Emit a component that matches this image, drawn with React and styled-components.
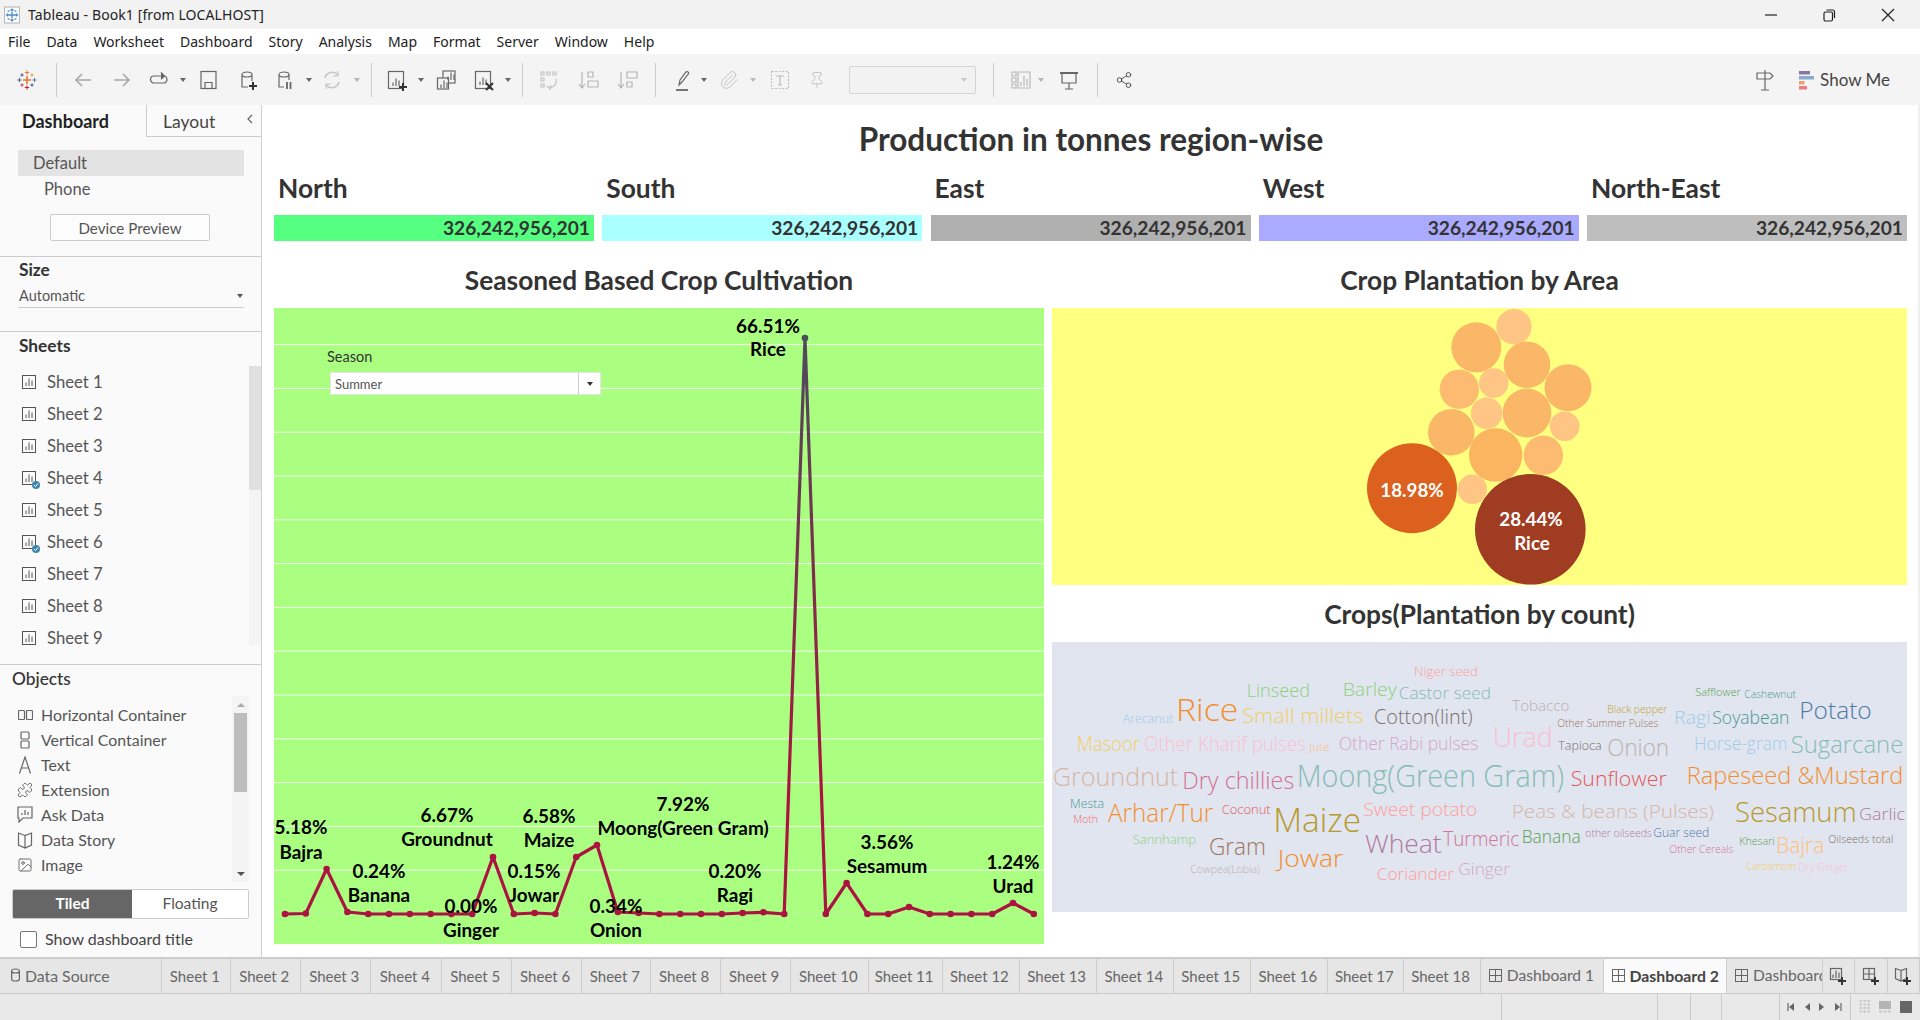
import React from 'react';
import styled, { createGlobalStyle } from 'styled-components';
import { Paperclip, Pin, Share2, Puzzle, Image as ImageIcon } from 'lucide-react';

const Global = createGlobalStyle`
  html, body { margin: 0; padding: 0; background: #fff; }
  * { box-sizing: border-box; }
`;
const UI = `"Noto Sans", "Open Sans", sans-serif`;
const TB = `Lato, "Open Sans", sans-serif`;

const Page = styled.div`width:1920px;height:1020px;overflow:hidden;display:flex;flex-direction:column;font-family:${TB};color:#333;background:#fff;`;
const TitleBar = styled.div`height:29px;background:#f2f2f2;display:flex;align-items:center;padding-left:4px;font:14px ${UI};color:#222;`;
const TitleText = styled.span`margin-left:8px;letter-spacing:.1px;`;
const WinControls = styled.div`margin-left:auto;padding-right:3px;display:flex;`;
const WinBtn = styled.div`width:58.5px;height:29px;display:flex;align-items:center;justify-content:center;color:#222;`;
const MenuBar = styled.div`height:25px;background:#fff;display:flex;align-items:center;padding-left:8px;gap:16px;font:14px ${UI};color:#222;`;
const Toolbar = styled.div`height:51px;background:#f4f4f4;display:flex;align-items:center;`;
const ToolSlot = styled.div`width:${p=>p.$w}px;margin-left:${p=>p.$ml||0}px;height:51px;flex:none;display:flex;align-items:center;justify-content:center;color:${p=>p.$c||'#666'};`;
const ToolSep = styled.div`width:1px;height:34px;flex:none;background:#ccc;`;
const Caret = styled.div`width:0;height:0;border-left:3.5px solid transparent;border-right:3.5px solid transparent;border-top:4px solid currentColor;`;
const Combo = styled.div`width:127px;height:28px;flex:none;margin:0 17.5px 0 20px;border:1px solid #d4d4d4;border-radius:2px;background:#f2f2f2;color:#c8c8c8;display:flex;align-items:center;justify-content:flex-end;padding-right:8px;`;
const ToolRight = styled.div`margin-left:auto;display:flex;align-items:center;padding-right:30px;`;
const ShowMe = styled.div`display:flex;align-items:center;gap:6px;margin-left:20px;font:17px ${TB};color:#444;`;

const Body = styled.div`height:852px;display:flex;`;
const Side = styled.aside`width:262px;flex:none;background:#fafafa;border-right:1px solid #cfcfcf;display:flex;flex-direction:column;`;
const SideTabs = styled.div`height:32px;display:flex;`;
const SideTabActive = styled.div`width:146px;padding-left:22px;font:700 18px/32px ${TB};color:#222;`;
const SideTab = styled.div`flex:1;border-left:1px solid #ccc;border-bottom:1px solid #ccc;padding-left:16px;font:17.5px/34px ${TB};color:#444;display:flex;justify-content:space-between;`;
const Chev = styled.span`padding:7px 6px 0 0;display:flex;color:#666;`;
const Sect = styled.section`height:${p=>p.$h}px;flex:none;border-bottom:1px solid #ccc;padding-top:${p=>p.$pt||0}px;`;
const DevRow = styled.div`height:26px;margin:0 17px 0 18px;padding-left:${p=>p.$sel?15:26}px;background:${p=>p.$sel?'#e3e3e3':'transparent'};font:16.5px/26px ${TB};color:#555;`;
const PreviewBtn = styled.div`width:160px;height:27px;margin:12px 0 0 50px;border:1px solid #ccc;border-radius:2px;background:#fcfcfc;text-align:center;font:15.2px/26px ${TB};color:#555;`;
const SideHead = styled.div`padding-left:${p=>p.$l||19}px;font:${p=>p.$w||700} 17.3px/20px ${TB};color:#333;`;
const Picker = styled.div`margin:4px 17px 0 18px;height:24px;padding:0 1px;border-bottom:1px solid #ccc;display:flex;justify-content:space-between;align-items:center;font:14.5px ${TB};color:#555;`;
const SheetBox = styled.div`margin-top:10px;height:279px;display:flex;`;
const SheetList = styled.div`flex:1;`;
const SheetRow = styled.div`height:32px;display:flex;align-items:center;padding:0 0 0 22px;gap:11px;font:16.7px ${TB};color:#555;`;
const SheetIco = styled.div`position:relative;width:14px;height:14px;display:flex;`;
const Badge = styled.div`position:absolute;right:-4px;bottom:-4px;width:8px;height:8px;border-radius:50%;background:#3f86ad;color:#fff;display:flex;`;
const Scroll = styled.div`width:${p=>p.$w}px;flex:none;background:#f4f4f4;display:flex;flex-direction:column;align-items:center;`;
const Thumb = styled.div`width:${p=>p.$w}px;height:${p=>p.$h}px;flex:none;background:${p=>p.$c};`;
const ScrollFill = styled.div`flex:1;`;
const ObjSect = styled.div`padding-top:4px;`;
const ObjBox = styled.div`margin-top:7px;height:186px;display:flex;padding:0 12px 0 17px;`;
const ObjList = styled.div`flex:1;padding-top:6px;`;
const ObjRow = styled.div`height:25px;display:flex;align-items:center;gap:8px;font:15.9px ${TB};color:#555;`;
const ObjIco = styled.div`width:16px;height:18px;display:flex;align-items:center;justify-content:center;color:#666;`;
const ArrowBtn = styled.div`height:17px;display:flex;align-items:center;justify-content:center;color:${p=>p.$c||'#aaa'};`;
const Triangle = styled.div`width:0;height:0;border-left:4px solid transparent;border-right:4px solid transparent;${p=>p.$up?'border-bottom':'border-top'}:4px solid currentColor;`;
const Toggle = styled.div`margin:7px 12px 0 12px;height:30px;display:flex;border:1px solid #ccc;border-radius:2px;overflow:hidden;`;
const ToggleBtn = styled.div`flex:${p=>p.$on?'0 0 119px':'1'};background:${p=>p.$on?'#666':'#fff'};color:${p=>p.$on?'#fff':'#555'};font:${p=>p.$on?700:400} 15.5px/26px ${TB};text-align:center;`;
const CheckRow = styled.div`margin:10px 0 0 20px;display:flex;align-items:center;gap:8px;font:16px ${TB};color:#444;`;
const Check = styled.div`width:17px;height:17px;margin-top:2px;border:1px solid #777;border-radius:2px;background:#fff;`;

const Main = styled.main`flex:1;padding-left:12px;position:relative;border-right:2px solid #efefef;display:flex;flex-direction:column;background:#fff;`;
const DashTitle = styled.h1`margin:0 0 0 -12px;height:70px;font:700 31.5px/68px ${TB};text-align:center;color:#333;padding-left:2px;`;
const Regions = styled.div`display:grid;grid-template-columns:repeat(5,320px);column-gap:8.25px;`;
const Region = styled.div`display:flex;flex-direction:column;`;
const RegionName = styled.div`height:40px;padding:0 0 14px 4px;font:700 26.4px/26px ${TB};color:#333;`;
const Kpi = styled.div`height:26px;background:${p=>p.$c};text-align:right;padding-right:4px;font:700 19.2px/26px ${TB};color:#333;`;
const Dash = styled.div`display:grid;grid-template-columns:770px 855px;gap:8px;`;
const Col = styled.div`display:flex;flex-direction:column;`;
const SecTitle = styled.div`height:${p=>p.$h}px;line-height:${p=>p.$l}px;padding-top:${p=>p.$t||0}px;font-size:26.3px;font-weight:700;text-align:center;color:#333;`;
const ChartPanel = styled.div`position:relative;overflow:hidden;height:636px;background:#aaff80;`;
const YellowPanel = styled.div`height:277px;background:#ffff80;overflow:hidden;`;
const CloudPanel = styled.div`height:270px;background:#e1e5ef;overflow:hidden;`;
const Draw = styled.svg`display:block;`;
const ChartText = styled.text`font:700 18.9px ${TB};fill:#000;text-anchor:middle;dominant-baseline:central;`;
const BubbleText = styled.text`font:700 18.8px ${TB};fill:#fff;text-anchor:middle;dominant-baseline:central;`;
const Word = styled.text`font-family:"Open Sans",sans-serif;font-weight:300;`;
const Filter = styled.div`position:absolute;left:53px;top:40px;`;
const FilterLabel = styled.div`font:14.5px/18px ${TB};color:#333;`;
const FilterBox = styled.div`margin:6px 0 0 3px;width:271px;height:23px;background:#fff;border:1px solid #e4e4e4;display:flex;align-items:center;justify-content:space-between;font:13px ${TB};color:#555;padding-left:4px;`;
const FilterArrow = styled.div`width:22px;height:21px;border-left:1px solid #ccc;display:flex;align-items:center;justify-content:center;color:#333;`;

const TabBar = styled.div`height:37px;display:flex;background:#e6e6e6;border-top:2px solid #ccc;border-bottom:1px solid #ccc;`;
const Tab = styled.div`width:${p=>p.$w}px;flex:none;overflow:hidden;white-space:nowrap;display:flex;align-items:center;gap:5px;justify-content:${p=>p.$left?'flex-start':'center'};padding:0 ${p=>p.$left?0:3}px ${p=>p.$left?2:0}px ${p=>p.$left?p.$left:0}px;border-right:1px solid #ccc;font:${p=>p.$on?700:400} ${p=>p.$fs||15}px ${TB};color:${p=>p.$on?'#444':'#666'};background:${p=>p.$on?'#fafafa':'transparent'};`;
const TabIco = styled.span`display:flex;flex:none;color:#666;`;
const StatusBar = styled.div`height:26px;display:flex;background:#e9e9e9;`;
const StatusCell = styled.div`width:${p=>p.$w}px;flex:none;border-right:1px solid #ccc;`;
const StatusNav = styled.div`width:${p=>p.$w}px;flex:none;border-right:${p=>p.$b?'1px solid #ccc':'none'};display:flex;align-items:center;justify-content:space-around;padding:0 4px;color:${p=>p.$c||'#666'};`;

const S = { fill:'none', stroke:'currentColor', strokeWidth:1.2 };
const I = ({w=24,h=24,children,vb}) => <svg width={w} height={h} viewBox={vb||`0 0 ${w} ${h}`} {...S}>{children}</svg>;
const Cross = ({x,y,s,c,w=1.3}) => <path d={`M${x-s} ${y}H${x+s}M${x} ${y-s}V${y+s}`} stroke={c} strokeWidth={w} fill="none"/>;

const Logo = () => <I w={20} h={22}>
  <Cross x={10} y={11} s={4} c="#e8762d" w={1.6}/><Cross x={10} y={3.5} s={2.2} c="#e8762d" w={1}/>
  <Cross x={10} y={18.5} s={2.2} c="#c72035" w={1}/><Cross x={2.5} y={11} s={2.2} c="#5b6591" w={1}/>
  <Cross x={17.5} y={11} s={2.2} c="#59879b" w={1}/><Cross x={5} y={6} s={1.6} c="#1f457e" w={.9}/>
  <Cross x={15} y={6} s={1.6} c="#eb912b" w={.9}/><Cross x={5} y={16} s={1.6} c="#c72035" w={.9}/><Cross x={15} y={16} s={1.6} c="#1f447e" w={.9}/></I>;
const AppIcon = () => <I w={16} h={18}><rect x=".5" y="1" width="15" height="16" fill="#fdfdfd" stroke="#bbb"/>
  <Cross x={8} y={9} s={3} c="#4f8dc4"/><Cross x={8} y={4} s={1.6} c="#4f8dc4"/><Cross x={8} y={14} s={1.6} c="#4f8dc4"/><Cross x={3.5} y={9} s={1.6} c="#4f8dc4"/><Cross x={12.5} y={9} s={1.6} c="#4f8dc4"/><Cross x={4.5} y={5} s={1} c="#7fb0d8"/><Cross x={11.5} y={5} s={1} c="#7fb0d8"/><Cross x={4.5} y={13} s={1} c="#7fb0d8"/><Cross x={11.5} y={13} s={1} c="#7fb0d8"/></I>;
const Bars = ({x=0,y=0}) => <path d={`M${x+4} ${y+11}V${y+7.5}M${x+7} ${y+11}V${y+3.5}M${x+10} ${y+11}V${y+5.5}`}/>;
const SheetGlyph = ({s=14}) => <svg width={s} height={s} viewBox="0 0 14 14" {...S} strokeWidth={1}><rect x=".5" y=".5" width="13" height="13"/><Bars/></svg>;
const Plus2 = ({x,y}) => <path d={`M${x-4} ${y}H${x+4}M${x} ${y-4}V${y+4}`} stroke="#333" strokeWidth={2}/>;

const tools = [
  [27,<Logo/>],[56,<ToolSep/>],
  [83,<I><path d="M20 12H5M11 6l-6 6 6 6" strokeWidth={1.6}/></I>,'#a8a8a8'],
  [121.6,<I><path d="M4 12h15M13 6l6 6-6 6" strokeWidth={1.6}/></I>,'#a8a8a8'],
  [159,<I><path d="M15 8H7a3.4 3.4 0 0 0 0 7h10a3.2 3.2 0 0 0 3-3.4c0-1.6-.8-2.8-2-3.6"/><path d="M14 4.5l3.5 3.5-3.5 3.2" fill="currentColor"/></I>],
  [183,<Caret/>],
  [209,<I><rect x="4" y="3.5" width="15" height="17"/><path d="M8 20.5v-6h7v6"/></I>],
  [248,<I><path d="M6 6.5a5 2.5 0 0 1 10 0V13M6 6.5V19h6M6 6.5a5 2.5 0 0 0 10 0"/><Plus2 x={17} y={18}/></I>],
  [285,<I><path d="M6 6.5a5 2.5 0 0 1 10 0V12M6 6.5V19h5M6 6.5a5 2.5 0 0 0 10 0"/><path d="M14 14v7M17.5 14v7" strokeWidth={1.8}/></I>],
  [309,<Caret/>],
  [332,<I><path d="M5 10a7.5 7.5 0 0 1 13-3M19 14a7.5 7.5 0 0 1-13 3" strokeWidth={1.6}/><path d="M18 3v5h-5M6 21v-5h5" /></I>,'#c6c6c6'],
  [357,<Caret/>,'#b5b5b5'],[372,<ToolSep/>],
  [397,<I><rect x="3.5" y="3.5" width="15" height="17"/><Bars x={4} y={7}/><Plus2 x={18} y={19}/></I>],
  [421,<Caret/>],
  [446.5,<I><rect x="9" y="3" width="12" height="12" fill="#f4f4f4"/><rect x="3.5" y="10" width="11" height="11" fill="#f4f4f4"/><Bars x={10} y={1}/><Bars x={3} y={9}/></I>],
  [484.5,<I><rect x="3.5" y="3.5" width="15" height="17"/><Bars x={4} y={6}/><path d="M14 15l7 7M21 15l-7 7" stroke="#333" strokeWidth={2}/></I>],
  [508,<Caret/>],[523,<ToolSep/>],
  [549,<I><path d="M4 4h3v3H4zM10 4h3v3h-3zM16 4h3v3h-3zM4 10h3v3H4zM4 16h3v3H4zM19 11c1 4-1 8-6 9M10 18l3 3 1-4"/></I>,'#c2c2c2'],
  [589,<I><path d="M5 4v15M2 16l3 4 3-4M11 4h5v5h-5zM11 13h10v6H11z"/></I>,'#b5b5b5'],
  [628,<I><path d="M5 4v15M2 16l3 4 3-4M11 4h10v6H11zM11 14h5v5h-5z"/></I>,'#b5b5b5'],
  [656,<ToolSep/>],
  [683,<I><path d="M8 17l1-5 6-8c1-1 3 0 2.6 1.6L11 14z" /><path d="M5 22h12" strokeWidth={1.8}/></I>],
  [704,<Caret/>],[729,<Paperclip size={20} strokeWidth={1.1}/>,'#bcbcbc'],[753,<Caret/>,'#bbb'],
  [780,<I><rect x="3.5" y="3.5" width="17" height="17" strokeDasharray="2 1.5"/><path d="M8 8h8M12 8v9M10 17h4"/></I>,'#bcbcbc'],
  [817,<Pin size={18} strokeWidth={1.1}/>,'#bcbcbc'],
];
const toolsB = [
  [1019.6,<I><path d="M4 4h4v4H4zM4 10h4v4H4zM4 16h4v4H4zM10 4h12v16H10zM13 18v-4M16 18V8M19 18v-7"/></I>,'#b8b8b8'],
  [1041,<Caret/>,'#b5b5b5'],
  [1068.6,<I><path d="M3 5h18" strokeWidth={2}/><path d="M5 5v10h14V5M12 15v6M8 21h8"/></I>],
  [1097.5,<ToolSep/>],
  [1124,<Share2 size={18} strokeWidth={1.2}/>,'#444'],
];
const slotWidth = (el) => (el.type === Caret ? 8 : el.type === ToolSep ? 1 : 24);
const slots = (list, start) => {
  let end = start;
  return list.map(([c, el, col], i) => {
    const w = slotWidth(el);
    const ml = c - w / 2 - end;
    end = c + w / 2;
    return <ToolSlot key={i} $w={w} $ml={ml} $c={col}>{el}</ToolSlot>;
  });
};

const sheets = [1,2,3,4,5,6,7,8,9];
const Objs = [
  ['Horizontal Container',<I w={15} h={12}><rect x=".5" y="1.5" width="6" height="9" rx="1"/><rect x="8.5" y="1.5" width="6" height="9" rx="1"/></I>],
  ['Vertical Container',<I w={12} h={18}><rect x="2" y="1" width="8" height="7" rx="1"/><rect x="2" y="10" width="8" height="7" rx="1"/></I>],
  ['Text',<I w={14} h={18}><path d="M1.5 17.5L7 1l5.5 16.5M3.5 12h7"/></I>],
  ['Extension',<Puzzle size={16} strokeWidth={1.4}/>],
  ['Ask Data',<I w={16} h={17}><path d="M1 1h14v11H6l-4 4v-4H1z"/><path d="M5 9V7M8 9V4M11 9V6"/></I>],
  ['Data Story',<I w={16} h={18}><path d="M8 4.5L1.5 2v12L8 17l6.5-3V2zM8 4.5V17"/></I>],
  ['Image',<ImageIcon size={16} strokeWidth={1.4}/>],
];
const regions = [['North','#55ff80'],['South','#aaffff'],['East','#b0b0b0'],['West','#aaaaff'],['North-East','#bebebe']];

const Y0 = 914;
const ptsY = [914,913.5,869,912,914,914,914,914,914,914,857,914,913,914,857,845,912,913,914,914,914,914,913,912.3,914,338,914,883,914,914,907,914,914,914,914,903,914];
const pts = ptsY.map((y,i)=>[285+i*20.8,y]);
const gridY = Array.from({length:13},(_,k)=>Y0-43.8*(k+1));
const labels = [
  ['5.18%','Bajra',301,826,851],['0.24%','Banana',379,870,894],['6.67%','Groundnut',447,814,838],
  ['0.00%','Ginger',471,905,929],['6.58%','Maize',549,815,839],['0.15%','Jowar',534,870,894],
  ['7.92%','Moong(Green Gram)',683,803,827],['0.34%','Onion',616,905,929],['0.20%','Ragi',735,870,894],
  ['66.51%','Rice',768,325,348],['3.56%','Sesamum',887,841,865],['1.24%','Urad',1013,861,885],
];
const bubbles = [
  [1514,326.7,17.7,'#fec585'],[1476.3,347.3,25,'#fbb768'],[1527,364.7,23.3,'#fbb768'],[1568,387.7,23.5,'#fbb768'],
  [1459.3,389.3,19.7,'#fdbb71'],[1493.7,383,14.7,'#fec585'],[1486.7,413.3,15.8,'#fec585'],[1527,413,24.4,'#fbb768'],
  [1564.7,426.3,14.8,'#fec585'],[1451.3,432.3,23.3,'#fbb768'],[1495.7,455,26.7,'#fbb561'],[1543.3,455.3,19.7,'#fdbb71'],
  [1472.3,489.3,14.7,'#fec585'],[1412,488.3,45,'#dc601e'],[1530.3,529.3,55.3,'#a03c21'],
];
const words = [
  ['Rice',1176,1238.3,721,31,'#f28e2b'],['Linseed',1246.7,1310,697.3,18,'#8cd17d'],['Barley',1342.7,1396.7,696,19,'#8cd17d'],
  ['Niger seed',1414,1478,676,12.5,'#ff9d9a'],['Castor seed',1398.7,1491,699.3,17,'#86bcb6'],['Arecanut',1122.7,1173.3,722.7,12.5,'#a0cbe8'],
  ['Small millets',1242.3,1363.3,723.3,20,'#f1ce63'],['Cotton(lint)',1374,1472.7,724,20,'#79706e'],['Masoor',1076.7,1140,750.7,20,'#f1ce63'],
  ['Other Kharif pulses',1144,1305.7,750.7,20,'#fabfd2'],['Jute',1309.3,1329.3,750.7,10.5,'#ffbe7d'],['Other Rabi pulses',1338.7,1478.3,750,18,'#d4a6c8'],
  ['Groundnut',1052.7,1178.3,785.7,26,'#d7b5a6'],['Dry chillies',1182.3,1294.3,788.7,23,'#d37295'],['Moong(Green Gram)',1296.7,1564,787.3,31,'#86bcb6'],
  ['Mesta',1070,1104,807.7,12.5,'#499894'],['Moth',1073.3,1097.7,823,10.5,'#f0686a'],['Arhar/Tur',1108,1213.3,821.7,25,'#f28e2b'],
  ['Coconut',1221.7,1270.7,813.7,12.5,'#e15759'],['Maize',1273.3,1361,831.7,33,'#b6992d'],['Sweet potato',1363.3,1477.3,815.7,19,'#ff9d9a'],
  ['Sannhamp',1132.7,1196,844,12.5,'#8cd17d'],['Gram',1209,1266,855,23,'#9d7660'],['Jowar',1277.7,1343.3,866.7,23,'#f28e2b'],
  ['Wheat',1365,1441.7,852.7,26,'#b07aa1'],['Turmeric',1443.3,1519.3,846,19.5,'#d37295'],['Cowpea(Lobia)',1190.3,1260,872.7,10.5,'#bab0ac'],
  ['Coriander',1376.7,1454,880,17,'#ff9d9a'],['Ginger',1458.3,1510,875,17,'#d4a6c8'],['Tobacco',1512.3,1569.3,711,14.5,'#bab0ac'],
  ['Black pepper',1607.3,1667.3,713.3,11,'#c4a02c'],['Other Summer Pulses',1557.3,1658.3,726.7,10.5,'#9d7660'],['Urad',1492.7,1552.7,746.7,27,'#fabfd2'],
  ['Tapioca',1558.3,1601.7,750,12,'#79706e'],['Onion',1607.3,1669,755.7,23,'#bab0ac'],['Ragi',1674,1710.7,724,19,'#a0cbe8'],
  ['Soyabean',1712.3,1789.3,724,18,'#499894'],['Safflower',1695.3,1740.7,695.7,10.5,'#59a14f'],['Cashewnut',1744.3,1796,698,10,'#499894'],
  ['Potato',1799.3,1871.7,719.3,23,'#4e79a7'],['Horse-gram',1694,1787.3,750,18,'#a0cbe8'],['Sugarcane',1790.7,1903.3,752.7,23,'#86bcb6'],
  ['Sunflower',1570.7,1666.7,785.7,19.5,'#e15759'],['Rapeseed &Mustard',1686.7,1903.3,784.3,23,'#f28e2b'],['Peas & beans (Pulses)',1511.7,1714,817.7,19,'#d7b5a6'],
  ['Sesamum',1735,1856.7,821.7,27,'#b6992d'],['Garlic',1859,1905,820,16.5,'#b07aa1'],['Banana',1521.7,1580.7,842.7,17.5,'#59a14f'],
  ['other oilseeds',1585.3,1651.7,836.7,11,'#b07aa1'],['Guar seed',1653.3,1709.3,836.7,12.5,'#4e79a7'],['Khesari',1739.3,1774.7,844.7,11,'#59a14f'],
  ['Bajra',1776,1824.3,852.7,22,'#ffbe7d'],['Oilseeds total',1828.3,1893.3,843.3,11,'#79706e'],['Other Cereals',1669.3,1733.3,852.7,11,'#d37295'],
  ['Cardamom',1746,1796,870,10.5,'#f1ce63'],['Dry Ginger',1798.3,1848.3,870.7,10.5,'#fabfd2'],
];
const menu = ['File','Data','Worksheet','Dashboard','Story','Analysis','Map','Format','Server','Window','Help'];
const tabs = [['Sheet 1',69],['Sheet 2',69.6],['Sheet 3',70.4],['Sheet 4',71],['Sheet 5',69.6],['Sheet 6',70.4],['Sheet 7',69],['Sheet 8',69.6],['Sheet 9',70.4],['Sheet 10',78],['Sheet 11',73.6],['Sheet 12',77],['Sheet 13',77.5],['Sheet 14',76.8],['Sheet 15',77],['Sheet 16',77.2],['Sheet 17',75.9],['Sheet 18',76.5]];
const DashGlyph = () => <svg width="13" height="13" viewBox="0 0 13 13" {...S} strokeWidth={1}><rect x=".5" y=".5" width="12" height="12"/><path d="M6.5 .5v12M.5 6.5h12"/></svg>;

export default function App() {
  return (
    <Page>
      <Global/>
      <TitleBar>
        <AppIcon/>
        <TitleText>Tableau - Book1 [from LOCALHOST]</TitleText>
        <WinControls>
          <WinBtn><I w={14} h={14}><path d="M1 7h12"/></I></WinBtn>
          <WinBtn><I w={14} h={14}><rect x="2" y="4" width="8.5" height="9" rx="1.5"/><path d="M4.5 2h6a2 2 0 0 1 2 2v6"/></I></WinBtn>
          <WinBtn><I w={14} h={14}><path d="M1 1l12 12M13 1L1 13"/></I></WinBtn>
        </WinControls>
      </TitleBar>
      <MenuBar>{menu.map(m=><span key={m}>{m}</span>)}</MenuBar>
      <Toolbar>
        {slots(tools,0)}
        <Combo><Caret/></Combo>
        <ToolSep/>
        {slots(toolsB,994)}
        <ToolRight>
          <ToolSlot $w={28}><I><path d="M12 2v20M8 22h8M4 5h13l3 3-3 3H4z"/></I></ToolSlot>
          <ShowMe>
            <I w={15} h={20}><rect y="1" width="11" height="3.5" fill="#8a76a0" stroke="none"/><rect y="6" width="15" height="3.5" fill="#87a8cf" stroke="none"/><rect y="11" width="5.5" height="3.5" fill="#f0a070" stroke="none"/><rect y="16" width="8" height="3.5" fill="#ef7a80" stroke="none"/></I>
            Show Me
          </ShowMe>
        </ToolRight>
      </Toolbar>
      <Body>
        <Side>
          <SideTabs>
            <SideTabActive>Dashboard</SideTabActive>
            <SideTab>Layout<Chev><I w={10} h={14}><path d="M7 3L3 7l4 4"/></I></Chev></SideTab>
          </SideTabs>
          <Sect $h={120} $pt={13}>
            <DevRow $sel>Default</DevRow>
            <DevRow>Phone</DevRow>
            <PreviewBtn>Device Preview</PreviewBtn>
          </Sect>
          <Sect $h={75} $pt={3}>
            <SideHead>Size</SideHead>
            <Picker>Automatic<Caret/></Picker>
          </Sect>
          <Sect $h={333} $pt={4}>
            <SideHead>Sheets</SideHead>
            <SheetBox>
              <SheetList>
                {sheets.map(n=>(
                  <SheetRow key={n}><SheetIco><SheetGlyph/>{(n===4||n===6)&&<Badge><svg width="8" height="8" viewBox="0 0 8 8" fill="none" stroke="currentColor" strokeWidth="1"><path d="M2 4l1.5 1.5L6 2.5"/></svg></Badge>}</SheetIco>Sheet {n}</SheetRow>
                ))}
              </SheetList>
              <Scroll $w={12}><Thumb $w={12} $h={124} $c="#e0e0e0"/></Scroll>
            </SheetBox>
          </Sect>
          <ObjSect>
            <SideHead $l={12} $w={500}>Objects</SideHead>
            <ObjBox>
              <ObjList>
                {Objs.map(([t,ic])=><ObjRow key={t}><ObjIco>{ic}</ObjIco>{t}</ObjRow>)}
              </ObjList>
              <Scroll $w={17}>
                <ArrowBtn><Triangle $up/></ArrowBtn>
                <Thumb $w={13} $h={79} $c="#bdbdbd"/>
                <ScrollFill/>
                <ArrowBtn $c="#555"><Triangle/></ArrowBtn>
              </Scroll>
            </ObjBox>
            <Toggle><ToggleBtn $on>Tiled</ToggleBtn><ToggleBtn>Floating</ToggleBtn></Toggle>
            <CheckRow><Check/>Show dashboard title</CheckRow>
          </ObjSect>
        </Side>
        <Main>
          <DashTitle>Production in tonnes region-wise</DashTitle>
          <Regions>
            {regions.map(([n,c])=>(
              <Region key={n}><RegionName>{n}</RegionName><Kpi $c={c}>326,242,956,201</Kpi></Region>
            ))}
          </Regions>
          <Dash>
            <Col>
              <SecTitle $h={67} $l={47} $t={16}>Seasoned Based Crop Cultivation</SecTitle>
              <ChartPanel>
                <Draw width="770" height="636" viewBox="274 308 770 636">
                  <defs>
                    <linearGradient id="lineGrad" gradientUnits="userSpaceOnUse" x1="0" y1="338" x2="0" y2="780">
                      <stop offset="0" stopColor="#4c4c5c"/><stop offset="1" stopColor="#ab1440"/>
                    </linearGradient>
                  </defs>
                  {gridY.map(y=><line key={y} x1="274" x2="1044" y1={y} y2={y} stroke="#fff" strokeOpacity=".85" strokeWidth="1"/>)}
                  <line x1="274" x2="1044" y1={Y0} y2={Y0} stroke="#ddd" strokeDasharray="1 2"/>
                  <polyline points={pts.map(p=>p.join(',')).join(' ')} fill="none" stroke="url(#lineGrad)" strokeWidth="3.2" strokeLinejoin="round"/>
                  {pts.map(([x,y])=><circle key={x} cx={x} cy={y} r="3.3" fill="url(#lineGrad)"/>)}
                  {labels.map(([a,b,x,y1,y2])=>(
                    <g key={b}><ChartText x={x} y={y1}>{a}</ChartText><ChartText x={x} y={y2}>{b}</ChartText></g>
                  ))}
                </Draw>
                <Filter>
                  <FilterLabel>Season</FilterLabel>
                  <FilterBox>Summer<FilterArrow><Caret/></FilterArrow></FilterBox>
                </Filter>
              </ChartPanel>
            </Col>
            <Col>
              <SecTitle $h={67} $l={47} $t={16}>Crop Plantation by Area</SecTitle>
              <YellowPanel>
                <Draw width="855" height="277" viewBox="1052 308 855 277">
                  {bubbles.map(([x,y,r,c])=><circle key={x+y} cx={x} cy={y} r={r} fill={c}/>)}
                  <BubbleText x={1412} y={489}>18.98%</BubbleText>
                  <BubbleText x={1531} y={518}>28.44%</BubbleText>
                  <BubbleText x={1532} y={542}>Rice</BubbleText>
                </Draw>
              </YellowPanel>
              <SecTitle $h={57} $l={59}>Crops(Plantation by count)</SecTitle>
              <CloudPanel>
                <Draw width="855" height="270" viewBox="1052 642 855 270">
                  {words.map(([t,x0,x1,y,s,c])=>(
                    <Word key={t} x={x0} y={y} fontSize={s} fill={c} textLength={x1-x0} lengthAdjust="spacingAndGlyphs">{t}</Word>
                  ))}
                </Draw>
              </CloudPanel>
            </Col>
          </Dash>
        </Main>
      </Body>
      <TabBar>
        <Tab $w={162.4} $left={11} $fs={15.8}>
          <TabIco><I w={9} h={14}><path d="M.6 3a3.9 2 0 0 1 7.8 0v8a3.9 2 0 0 1-7.8 0zM.6 3a3.9 2 0 0 0 7.8 0"/></I></TabIco>Data Source
        </Tab>
        {tabs.map(([t,w])=><Tab key={t} $w={w}>{t}</Tab>)}
        <Tab $w={122.7} $left={8} $fs={15.6}><TabIco><DashGlyph/></TabIco>Dashboard 1</Tab>
        <Tab $w={123.6} $left={8} $on $fs={15.8}><TabIco><DashGlyph/></TabIco>Dashboard 2</Tab>
        <Tab $w={95.7} $left={8} $fs={15.6}><TabIco><DashGlyph/></TabIco>Dashboard 3</Tab>
        <Tab $w={32.5}><I w={20} h={20}><rect x="3.5" y="2.5" width="11" height="11"/><Bars x={2} y={1}/><Plus2 x={15} y={15}/></I></Tab>
        <Tab $w={32.5}><I w={20} h={20}><rect x="3.5" y="2.5" width="11" height="11"/><path d="M9 2.5v11M3.5 8h11"/><Plus2 x={15} y={15}/></I></Tab>
        <Tab $w={32.5}><I w={20} h={20}><path d="M9 4.5L3.5 2.5v10l5.5 2.5 5.5-2.5v-10zM9 4.5V15"/><Plus2 x={15} y={15}/></I></Tab>
      </TabBar>
      <StatusBar>
        <StatusCell $w={1501.6}/>
        <StatusCell $w={156.4}/>
        <StatusCell $w={32.6}/>
        <StatusCell $w={31.8}/>
        <StatusCell $w={57.2}/>
        <StatusNav $w={71} $b>
          <I w={8} h={10}><path d="M1 1v8" /><path d="M7 1L2 5l5 4z" fill="currentColor" stroke="none"/></I>
          <I w={8} h={10}><path d="M7 1L2 5l5 4z" fill="currentColor" stroke="none"/></I>
          <I w={8} h={10}><path d="M1 1l5 4-5 4z" fill="currentColor" stroke="none"/></I>
          <I w={8} h={10}><path d="M7 1v8"/><path d="M1 1l5 4-5 4z" fill="currentColor" stroke="none"/></I>
        </StatusNav>
        <StatusNav $w={69.4}>
          <I w={12} h={14}><path d="M.5 1h11M.5 4.5h11M.5 8h11M.5 11.5h11" stroke="#c8c8c8" strokeWidth="2" strokeDasharray="2.5 1.4"/></I>
          <I w={12} h={14}><rect x="0" y="1" width="12" height="8" fill="#b5b5b5" stroke="none"/><path d="M0 11.5h12" stroke="#c8c8c8" strokeWidth="2" strokeDasharray="3 1.5"/></I>
          <I w={12} h={14}><rect x="0" y="1" width="12" height="12" fill="#666" stroke="none"/></I>
        </StatusNav>
      </StatusBar>
    </Page>
  );
}
